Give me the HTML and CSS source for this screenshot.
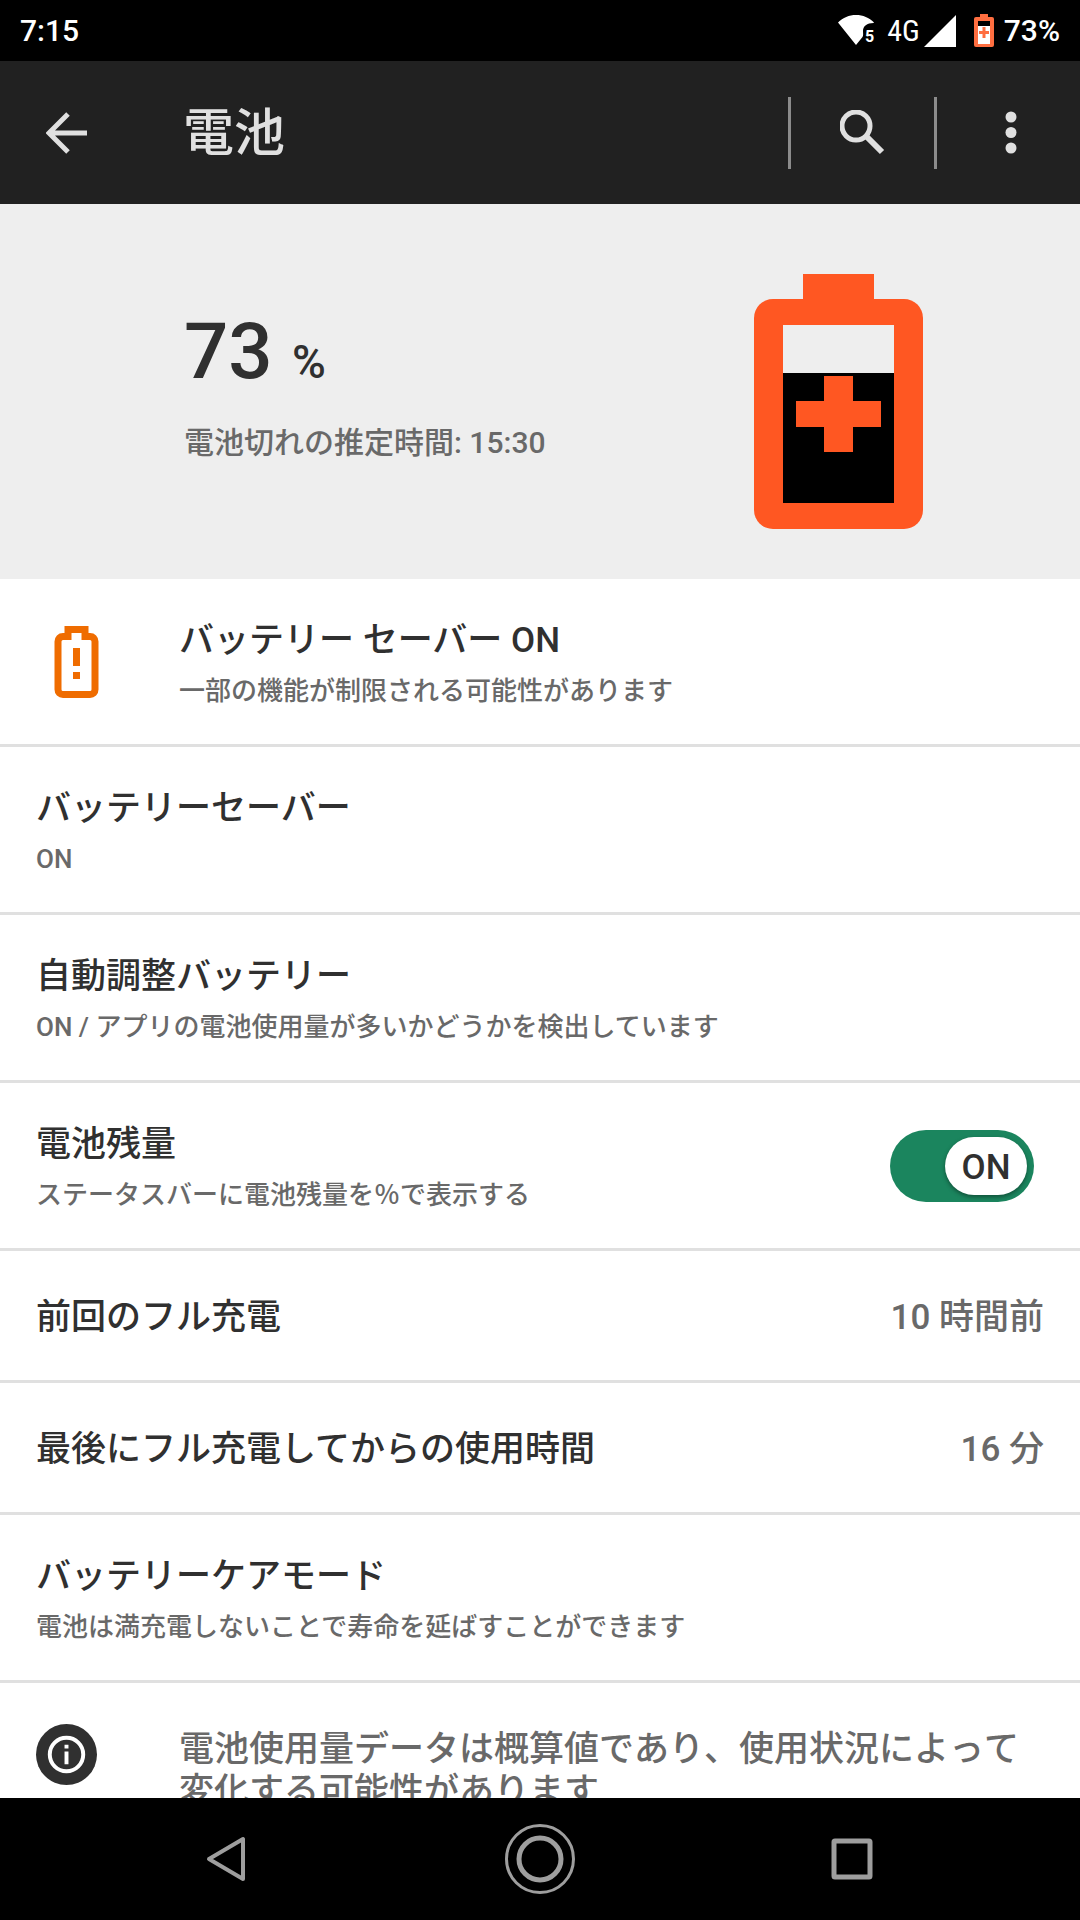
FILE: index.html
```html
<!DOCTYPE html>
<html lang="ja">
<head>
<meta charset="utf-8">
<meta name="viewport" content="width=device-width, initial-scale=1">
<title>電池</title>
<link rel="stylesheet" href="styles.css">
</head>
<body>
<div class="statusbar">
  <span class="clock">7:15</span>
  <svg class="wifi" width="40" height="32" viewBox="0 0 40 32" aria-hidden="true">
    <path d="M0 7.500C5 2.500 11 0 18 0s13 2.500 18 7.500L35.500 8C29 8 25 11 25 16c0 3 .5 4.500-.5 6L18 30z" fill="#fff"/>
    <text class="wifi-gen" x="27" y="27">5</text>
  </svg>
  <span class="network">4G</span>
  <svg class="signal" width="32" height="32" viewBox="0 0 32 32" aria-hidden="true"><path d="M0 32L32 0v32z" fill="#fff"/></svg>
  <svg class="mini-battery" width="20" height="33" viewBox="0 0 20 33" aria-hidden="true">
    <path d="M6 0h8v3H6z" fill="#ff6e40"/>
    <rect y="3" width="20" height="30" rx="2" fill="#ff6e40"/>
    <path d="M4 7h12v5H4z" fill="#000"/>
    <path d="M4 12h12v18H4z" fill="#fff"/>
    <path d="M8.500 13h3v4H15v3h-3.500v4h-3v-4H5v-3h3.500z" fill="#ff6e40"/>
  </svg>
  <span class="level">73%</span>
</div>

<header class="appbar">
  <button class="back" type="button" aria-label="戻る">
    <svg width="42" height="42" viewBox="0 0 42 42"><path d="M41 21H4M22 2L3 21l19 19" fill="none" stroke="#e0e0e0" stroke-width="5"/></svg>
  </button>
  <h1>電池</h1>
  <button class="action" type="button" aria-label="検索">
    <svg width="46" height="46" viewBox="0 0 46 46"><circle cx="16" cy="16" r="14" fill="none" stroke="#e0e0e0" stroke-width="5"/><path d="M26 26l16 16" stroke="#e0e0e0" stroke-width="6"/></svg>
  </button>
  <button class="action" type="button" aria-label="その他">
    <svg width="46" height="46" viewBox="0 0 46 46" fill="#e0e0e0"><circle cx="25" cy="7" r="5.500"/><circle cx="25" cy="22.500" r="5.500"/><circle cx="25" cy="38" r="5.500"/></svg>
  </button>
</header>

<main>
  <section class="hero">
    <div class="hero-text">
      <p class="charge">73 <span class="unit">%</span></p>
      <p class="estimate">電池切れの推定時間: 15:30</p>
    </div>
    <svg width="169" height="255" viewBox="0 0 169 255" aria-hidden="true">
      <path d="M49 0h71v26H49z" fill="#ff5722"/>
      <rect y="25" width="169" height="230" rx="19" fill="#ff5722"/>
      <path d="M29 51h111v48H29z" fill="#eee"/>
      <path d="M29 99h111v130H29z" fill="#000"/>
      <path d="M70 102h29v25h28v26H99v25H70v-25H42v-26h28z" fill="#ff5722"/>
    </svg>
  </section>

  <ul class="settings">
    <li class="row">
      <span class="lead">
        <svg class="saver-icon" width="45" height="72" viewBox="0 0 45 72" aria-hidden="true">
          <path d="M14 3.500h17v7h5c3 0 5 2 5 5v48c0 3-2 5-5 5H9c-3 0-5-2-5-5v-48c0-3 2-5 5-5h5z" fill="none" stroke="#ef6c00" stroke-width="7"/>
          <path d="M19 22h7v18h-7zM19 46h7v7h-7z" fill="#ef6c00"/>
        </svg>
      </span>
      <div class="text"><h2>バッテリー セーバー ON</h2><p>一部の機能が制限される可能性があります</p></div>
    </li>
    <li class="row"><div class="text"><h2>バッテリーセーバー</h2><p>ON</p></div></li>
    <li class="row"><div class="text"><h2>自動調整バッテリー</h2><p>ON / アプリの電池使用量が多いかどうかを検出しています</p></div></li>
    <li class="row">
      <div class="text"><h2><label for="percent">電池残量</label></h2><p>ステータスバーに電池残量を％で表示する</p></div>
      <label class="switch"><input id="percent" type="checkbox" role="switch" checked><span class="knob">ON</span></label>
    </li>
    <li class="row single"><h2 class="text">前回のフル充電</h2><span class="value">10 時間前</span></li>
    <li class="row single"><h2 class="text">最後にフル充電してからの使用時間</h2><span class="value">16 分</span></li>
    <li class="row"><div class="text"><h2>バッテリーケアモード</h2><p>電池は満充電しないことで寿命を延ばすことができます</p></div></li>
  </ul>

  <footer class="note">
    <span class="lead">
      <svg width="61" height="61" viewBox="0 0 62 62" aria-hidden="true">
        <circle cx="31" cy="31" r="31" fill="#303030"/>
        <circle cx="31" cy="31" r="17" fill="none" stroke="#fff" stroke-width="4"/>
        <path d="M29 21h4v4h-4zM29 28h4v13h-4z" fill="#fff"/>
      </svg>
    </span>
    <p>電池使用量データは概算値であり、使用状況によって変化する可能性があります</p>
  </footer>
</main>

<nav class="navbar">
  <button type="button" aria-label="戻る"><svg width="70" height="70" viewBox="0 0 70 70"><path d="M50 15v40L16 35z" fill="none" stroke="#9e9e9e" stroke-width="4" stroke-linejoin="round"/></svg></button>
  <button type="button" aria-label="ホーム"><svg width="70" height="70" viewBox="0 0 70 70" fill="none" stroke="#9e9e9e"><circle cx="35" cy="35" r="33.500" stroke-width="3"/><circle cx="35" cy="35" r="21" stroke-width="5"/></svg></button>
  <button type="button" aria-label="履歴"><svg width="70" height="70" viewBox="0 0 70 70"><rect x="17" y="17" width="36" height="36" rx="1" fill="none" stroke="#9e9e9e" stroke-width="5" stroke-linejoin="round"/></svg></button>
</nav>
</body>
</html>
```

FILE: styles.css
```css
* {
  box-sizing: border-box;
  margin: 0;
  padding: 0;
}

body {
  display: flex;
  flex-direction: column;
  height: 100vh;
  background: #fff;
  color: #303030;
  font-family: Roboto, "Noto Sans CJK JP", sans-serif;
  font-weight: 500;
}

svg {
  display: block;
  flex: none;
}

button {
  display: flex;
  align-items: center;
  justify-content: center;
  border: 0;
  background: none;
}

.statusbar {
  display: flex;
  flex: none;
  align-items: center;
  height: 61px;
  padding: 0 20px;
  background: #000;
  color: #fff;
  font-size: 30px;
  line-height: 40px;
}

.clock {
  flex: 1;
}

.wifi {
  margin-right: 9px;
}

.wifi-gen {
  fill: #fff;
  font-size: 16px;
  font-weight: 700;
}

.network {
  margin-right: 4px;
  font-family: "Roboto Condensed", "Liberation Sans Narrow", Roboto, sans-serif;
  font-size: 30px;
  font-weight: 400;
}

.mini-battery {
  margin: 0 10px 0 18px;
}

.appbar {
  display: flex;
  flex: none;
  align-items: center;
  height: 143px;
  background: #212121;
  color: #e0e0e0;
}

.back {
  width: 133px;
  height: 143px;
}

.appbar h1 {
  flex: 1;
  padding: 3px 0 0 50px;
  font-size: 51px;
  font-weight: 500;
  line-height: 72px;
}

.action {
  width: 146px;
  height: 72px;
  border-left: 3px solid #8c8c8c;
}

main {
  flex: 1;
  min-height: 0;
  overflow: hidden;
}

.hero {
  display: flex;
  align-items: flex-start;
  justify-content: space-between;
  padding: 70px 157px 50px 184px;
  background: #eee;
}

.hero-text {
  padding-top: 32px;
}

.charge {
  font-size: 78px;
  line-height: 92px;
}

.unit {
  font-size: 46px;
}

.estimate {
  margin-top: 13px;
  color: #696969;
  font-size: 30px;
  line-height: 44px;
}

.settings {
  list-style: none;
}

.row {
  display: flex;
  align-items: center;
  min-height: 168px;
  padding: 0 36px;
  border-bottom: 3px solid #e0e0e0;
}

.row.single {
  min-height: 132px;
  padding-top: 4px;
}

.lead {
  flex: none;
  width: 143px;
}

.saver-icon {
  margin-left: 18px;
}

.text {
  flex: 1;
}

h2 {
  font-size: 35px;
  font-weight: 500;
  line-height: 56px;
}

.text p {
  margin-top: 2px;
  color: #696969;
  font-size: 26px;
  line-height: 40px;
}

.value {
  color: #696969;
  font-size: 35px;
  line-height: 56px;
}

.switch {
  display: grid;
  align-items: center;
  margin-right: 10px;
}

.switch input {
  grid-area: 1 / 1;
  width: 144px;
  height: 72px;
  border-radius: 36px;
  background: #1b855e;
  appearance: none;
}

.knob {
  grid-area: 1 / 1;
  justify-self: end;
  width: 82px;
  height: 58px;
  margin-right: 7px;
  border-radius: 29px;
  background: #fff;
  box-shadow: 0 2px 4px rgba(0, 0, 0, 0.4);
  font-size: 35px;
  line-height: 62px;
  text-align: center;
}

.note {
  display: flex;
  padding: 41px 36px 0;
}

.note p {
  flex: 1;
  padding-top: 5px;
  color: #696969;
  font-size: 35px;
  font-kerning: none;
  line-height: 42px;
  text-spacing-trim: space-all;
}

.navbar {
  display: grid;
  flex: none;
  grid-template-columns: repeat(3, 1fr);
  align-items: center;
  height: 122px;
  padding: 0 72px;
  background: #000;
}
```
